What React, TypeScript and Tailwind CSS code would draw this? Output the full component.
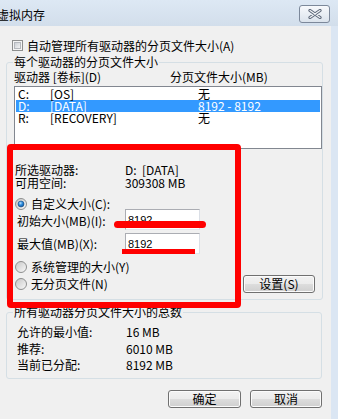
import { useId } from "react";

function Radio({ checked = false }: { checked?: boolean }) {
  const id = useId();
  return (
    <svg width="12" height="12" viewBox="0 0 12 12" className="shrink-0">
      <defs>
        <linearGradient id={id + "a"} x1="0" y1="0" x2="1" y2="1">
          <stop offset="0" stopColor="#c4c4c4" />
          <stop offset="1" stopColor="#fbfbfb" />
        </linearGradient>
        <radialGradient id={id + "b"} cx="0.4" cy="0.35" r="0.7">
          <stop offset="0" stopColor="#bfe3fc" />
          <stop offset="0.45" stopColor="#2f8fe0" />
          <stop offset="1" stopColor="#0b4f97" />
        </radialGradient>
      </defs>
      <circle cx="6" cy="6" r="5.5" fill={`url(#${id}a)`} stroke="#8e8f8f" />
      {checked && <circle cx="6" cy="6" r="3" fill={`url(#${id}b)`} stroke="#1c4f82" strokeWidth="0.6" />}
    </svg>
  );
}

function Checkbox() {
  const id = useId();
  return (
    <svg width="11" height="11" viewBox="0 0 11 11" className="shrink-0">
      <defs>
        <linearGradient id={id} x1="0" y1="0" x2="1" y2="1">
          <stop offset="0" stopColor="#c9cdd3" />
          <stop offset="1" stopColor="#f5f5f5" />
        </linearGradient>
      </defs>
      <rect x="0.5" y="0.5" width="10" height="10" fill="#f4f4f4" stroke="#8e8f8f" />
      <rect x="2.5" y="2.5" width="6" height="6" fill={`url(#${id})`} stroke="#b5b8bd" />
    </svg>
  );
}

function WinButton({ children, className = "" }: { children: React.ReactNode; className?: string }) {
  return (
    <div
      className={
        "h-[18px] flex items-center justify-center rounded-[3px] border border-[#707070] bg-[linear-gradient(to_bottom,#f2f2f2_0%,#ebebeb_50%,#dddddd_50%,#cfcfcf_100%)] shadow-[inset_0_0_0_1px_#fbfbfb] " +
        className
      }
    >
      {children}
    </div>
  );
}

const rows = [
  { drive: "C:", label: "[OS]", size: "无", selected: false },
  { drive: "D:", label: "[DATA]", size: "8192 - 8192", selected: true },
  { drive: "R:", label: "[RECOVERY]", size: "无", selected: false },
];

export default function App() {
  return (
    <div className="relative w-[338px] h-[419px] overflow-hidden bg-[#f0f0f0] text-[12px] leading-[12px] text-black font-['Noto_Sans_CJK_SC',sans-serif]">
      {/* title bar */}
      <div className="flex items-start h-[26px] bg-[linear-gradient(to_bottom,#dde8f4,#d2deeb)]">
        <span className="-ml-[3px] mt-[9px] whitespace-nowrap">虚拟内存</span>
        <div className="ml-auto mr-[8px] mt-[5px] w-[31px] h-[18px] flex items-center justify-center rounded-[3px] border border-[#7c889a] bg-[linear-gradient(to_bottom,#f7f9fc,#dbe3ec)]">
          <svg width="14" height="10" viewBox="0 0 14 10">
            <path d="M2 1.5 L12 8.5 M12 1.5 L2 8.5" stroke="#5b6677" strokeWidth="3.2" strokeLinecap="round" />
            <path d="M2 1.5 L12 8.5 M12 1.5 L2 8.5" stroke="#f4f6f9" strokeWidth="1.2" strokeLinecap="round" />
          </svg>
        </div>
      </div>

      <div className="flex h-[393px]">
        <div className="w-[331px] flex flex-col">
          {/* auto manage */}
          <div className="mt-[14px] h-[11px] pl-[12px] flex items-center gap-[4px] whitespace-nowrap">
            <Checkbox />
            <span>自动管理所有驱动器的分页文件大小(A)</span>
          </div>

          {/* per-drive group */}
          <fieldset className="mt-[5px] ml-[6px] w-[316px] h-[244px] border border-[#d5dfe5] rounded-[3px]">
            <legend className="ml-[6px] px-[1px] h-[12px] whitespace-nowrap">每个驱动器的分页文件大小</legend>
            <div className="mt-[3px] h-[12px] flex pl-[7px] whitespace-nowrap">
              <span className="w-[156px]">驱动器 [卷标](D)</span>
              <span>分页文件大小(MB)</span>
            </div>
            <div className="mt-[3px] ml-[7px] w-[308px] h-[63px] border border-[#828790] bg-white pt-[1px]">
              {rows.map((r) => (
                <div
                  key={r.drive}
                  className={
                    "mx-[1px] h-[12px] flex pl-[2px] whitespace-nowrap " +
                    (r.selected ? "bg-[#3399ff] text-white" : "")
                  }
                >
                  <span className="w-[32px]">{r.drive}</span>
                  <span className="w-[148px]">{r.label}</span>
                  <span>{r.size}</span>
                </div>
              ))}
            </div>

            <div className="mt-[15px] h-[12px] flex pl-[8px] whitespace-nowrap">
              <span className="w-[110px]">所选驱动器:</span>
              <span>D:&nbsp;&nbsp;[DATA]</span>
            </div>
            <div className="mt-[1px] h-[12px] flex pl-[8px] whitespace-nowrap">
              <span className="w-[110px]">可用空间:</span>
              <span>309308 MB</span>
            </div>

            <div className="mt-[9px] h-[12px] flex items-center gap-[4px] pl-[8px] whitespace-nowrap">
              <Radio checked />
              <span>自定义大小(C):</span>
            </div>
            <div className="-mt-[1px] h-[21px] flex items-center pl-[10px] whitespace-nowrap">
              <span className="w-[108px] mt-[3px]">初始大小(MB)(I):</span>
              <div className="w-[75px] h-[21px] border border-[#abadb3] border-b-[#e3e9ef] border-r-[#dbdfe6] bg-white pl-[2px] flex items-center font-['Liberation_Sans',sans-serif] text-[11px]">
                8192
              </div>
            </div>
            <div className="mt-[3px] h-[21px] flex items-center pl-[10px] whitespace-nowrap">
              <span className="w-[108px]">最大值(MB)(X):</span>
              <div className="w-[75px] h-[21px] border border-[#abadb3] border-b-[#e3e9ef] border-r-[#dbdfe6] bg-white pl-[2px] flex items-center font-['Liberation_Sans',sans-serif] text-[11px]">
                8192
              </div>
            </div>
            <div className="mt-[7px] h-[12px] flex items-center gap-[4px] pl-[8px] whitespace-nowrap">
              <Radio />
              <span>系统管理的大小(Y)</span>
            </div>
            <div className="mt-[2px] h-[18px] flex items-center pl-[8px] pr-[7px] whitespace-nowrap">
              <Radio />
              <span className="ml-[4px]">无分页文件(N)</span>
              <WinButton className="ml-auto w-[72px]">设置(S)</WinButton>
            </div>
          </fieldset>

          {/* totals group */}
          <fieldset className="mt-[6px] ml-[6px] w-[316px] h-[73px] border border-[#d5dfe5] rounded-[3px]">
            <legend className="ml-[6px] px-[1px] h-[12px] whitespace-nowrap">所有驱动器分页文件大小的总数</legend>
            <div className="mt-[8px] h-[12px] flex pl-[10px] whitespace-nowrap">
              <span className="w-[109px]">允许的最小值:</span>
              <span>16 MB</span>
            </div>
            <div className="mt-[5px] h-[12px] flex pl-[10px] whitespace-nowrap">
              <span className="w-[109px]">推荐:</span>
              <span>6010 MB</span>
            </div>
            <div className="mt-[4px] h-[12px] flex pl-[10px] whitespace-nowrap">
              <span className="w-[109px]">当前已分配:</span>
              <span>8192 MB</span>
            </div>
          </fieldset>

          <div className="mt-[11px] flex justify-end gap-[9px] pr-[9px]">
            <WinButton className="w-[73px]">确定</WinButton>
            <WinButton className="w-[72px]">取消</WinButton>
          </div>
        </div>
        <div className="w-[7px] bg-[#dbe6f3]" />
      </div>

      {/* red annotation */}
      <div className="absolute left-[7px] top-[144px] w-[234px] h-[164px] border-[6px] border-[#ff0000] rounded-[4px] pointer-events-none" />
      <div className="absolute left-[114px] top-[221px] w-[92px] h-[7px] rounded-full bg-[#ff0000]" />
      <div className="absolute left-[122px] top-[249px] w-[73px] h-[5px] bg-[#ff0000]" />
    </div>
  );
}
